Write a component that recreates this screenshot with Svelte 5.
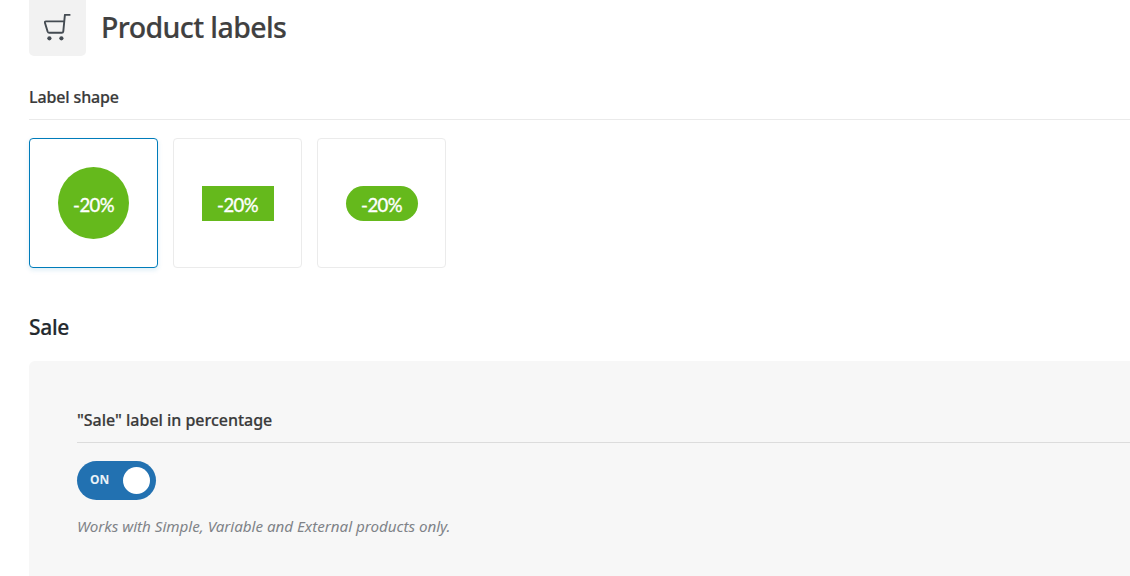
<script>
	const shapes = ["circle", "rectangle", "rounded"];

	let selected = $state("circle");
	let percentage = $state(true);
</script>

<main>
	<header>
		<div class="icon">
			<svg width="28" height="28" viewBox="0 0 28 28" aria-hidden="true">
				<path d="M25.6 .9H20.9L19.3 17.3Q19.1 18.8 17.7 18.8H5.3Q4.1 18.8 3.6 17.5L1 9Q.5 7.4 2 7.4H20.1" />
				<circle cx="5.4" cy="24.3" r="2.1" />
				<circle cx="17.4" cy="24.3" r="2.1" />
			</svg>
		</div>
		<h1>Product labels</h1>
	</header>

	<h3>Label shape</h3>
	<div class="shapes">
		{#each shapes as shape}
			<button
				class="shape"
				class:active={selected === shape}
				aria-label={shape}
				onclick={() => (selected = shape)}
			>
				<span class="badge {shape}">-20%</span>
			</button>
		{/each}
	</div>

	<h2>Sale</h2>
	<section>
		<h3>"Sale" label in percentage</h3>
		<button
			class="switch"
			class:off={!percentage}
			onclick={() => (percentage = !percentage)}
		>
			<span class="state">{percentage ? "ON" : "OFF"}</span>
			<span class="knob"></span>
		</button>
		<p>Works with Simple, Variable and External products only.</p>
	</section>
</main>

<style>
	:global(body) {
		background: #fff;
		overflow: hidden;
	}

	main {
		height: 576px;
		padding-left: 29px;
		box-sizing: border-box;
		overflow: hidden;
		font-family: "Segoe UI", "Noto Sans", "Open Sans", sans-serif;
	}

	h1,
	h2,
	h3,
	p {
		margin: 0;
		white-space: nowrap;
	}

	header {
		display: flex;
		height: 56px;
		gap: 15px;
	}

	.icon {
		width: 57px;
		height: 56px;
		display: flex;
		align-items: center;
		justify-content: center;
		border-radius: 0 0 5px 5px;
		background: #f2f2f2;
	}

	.icon svg {
		fill: none;
		stroke: #444b52;
		stroke-width: 1.9;
		stroke-linejoin: round;
		stroke-linecap: round;
	}

	.icon circle {
		fill: #444b52;
		stroke: none;
	}

	h1 {
		color: #404040;
		font-size: 28.5px;
		font-weight: 500;
		letter-spacing: -0.6px;
		line-height: 55px;
		-webkit-text-stroke: 0.2px;
	}

	h3 {
		height: 24px;
		padding-bottom: 10px;
		border-bottom: 1px solid #eaeaea;
		color: #3a3a3a;
		font-size: 16px;
		font-weight: 500;
		letter-spacing: -0.13px;
		line-height: 24px;
		-webkit-text-stroke: 0.2px;
	}

	header + h3 {
		margin-top: 29px;
	}

	.shapes {
		display: flex;
		gap: 15px;
		margin-top: 18px;
	}

	button {
		padding: 0;
		font-family: inherit;
		cursor: pointer;
	}

	.shape {
		width: 129px;
		height: 130px;
		box-sizing: border-box;
		display: flex;
		align-items: center;
		justify-content: center;
		border: 1px solid #ebebeb;
		border-radius: 4px;
		background: #fff;
	}

	.shape.active {
		border-color: #007cba;
		box-shadow: 0 2px 5px rgba(0, 124, 186, 0.14);
	}

	.badge {
		width: 72px;
		height: 35px;
		color: #fff;
		background: #65b91c;
		font-family: Lato, sans-serif;
		font-size: 18.5px;
		letter-spacing: -0.6px;
		line-height: 38px;
		text-align: center;
		-webkit-text-stroke: 0.35px #fff;
	}

	.badge.circle {
		width: 71px;
		height: 72px;
		border-radius: 50%;
		line-height: 76px;
	}

	.badge.rounded {
		border-radius: 18px;
	}

	h2 {
		margin-top: 44px;
		color: #23282d;
		font-size: 21px;
		font-weight: 500;
		letter-spacing: -0.3px;
		line-height: 30px;
		-webkit-text-stroke: 0.2px;
	}

	section {
		height: 300px;
		margin-top: 19px;
		padding: 47px 0 0 48px;
		border-radius: 6px 0 0 0;
		background: #f7f7f7;
	}

	section h3 {
		border-color: #dcdcdc;
		letter-spacing: -0.02px;
	}

	.switch {
		display: flex;
		align-items: center;
		justify-content: space-between;
		width: 79px;
		height: 39px;
		margin-top: 18px;
		padding: 0 6px 0 13px;
		box-sizing: border-box;
		border: 0;
		border-radius: 20px;
		background: #2271b1;
	}

	.switch.off {
		flex-direction: row-reverse;
		background: #a7aaad;
	}

	.state {
		color: #e9f1f7;
		font-size: 12px;
		font-weight: 700;
		line-height: 37px;
		height: 39px;
	}

	.knob {
		width: 27px;
		height: 27px;
		border-radius: 50%;
		background: #fff;
	}

	p {
		margin-top: 14px;
		color: #7f8388;
		font-size: 15.2px;
		font-style: italic;
		letter-spacing: -0.02px;
		line-height: 24px;
	}
</style>
